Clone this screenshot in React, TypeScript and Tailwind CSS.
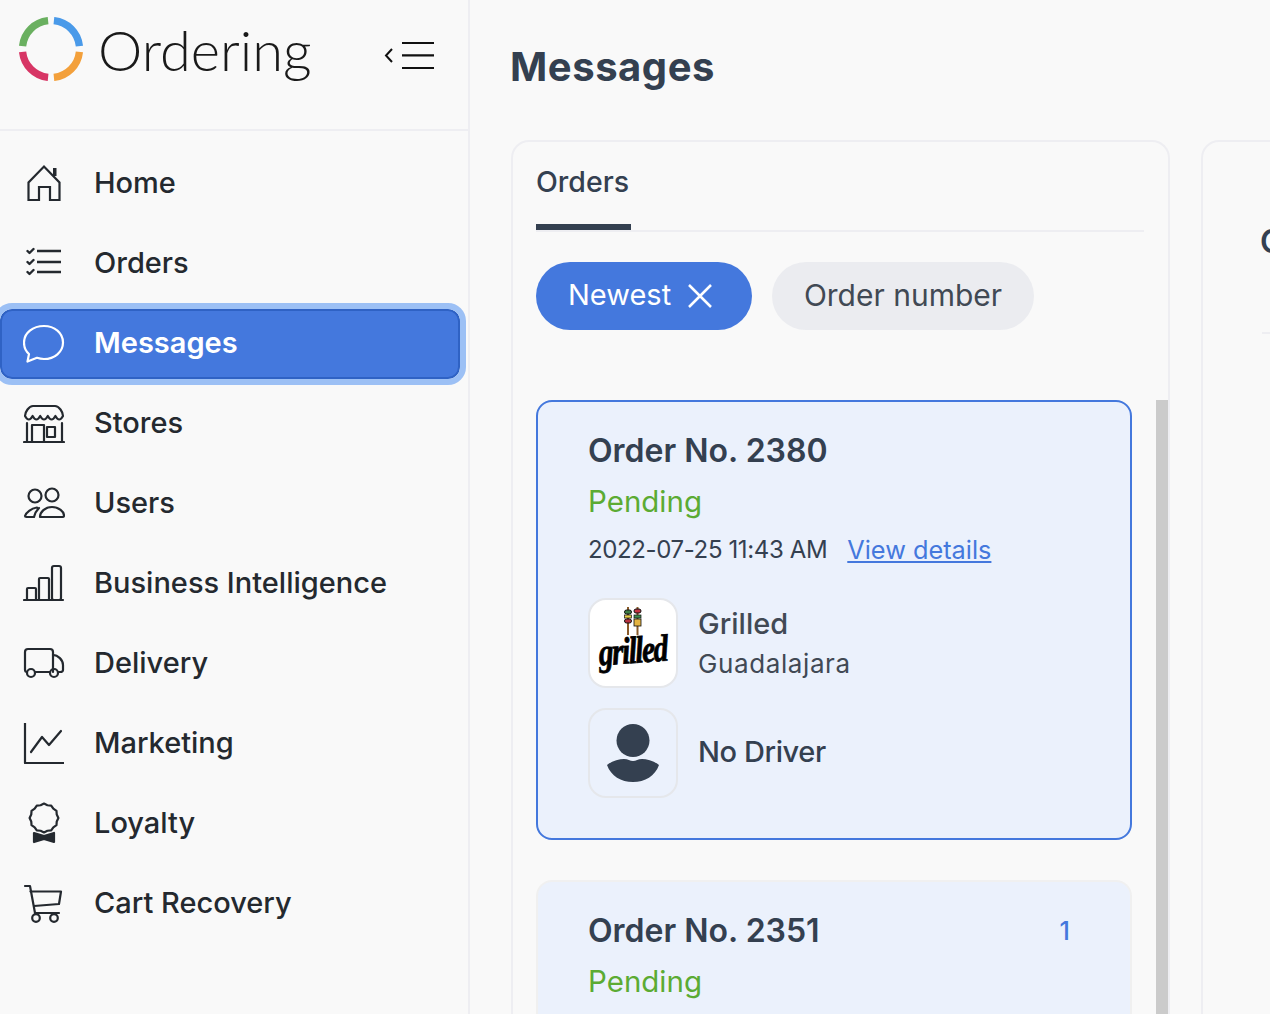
import React from "react";

const S = ({ children }: { children: React.ReactNode }) => (
  <svg width="42" height="42" viewBox="0 0 42 42" fill="none" stroke="currentColor" strokeWidth="2.200" strokeLinecap="round" strokeLinejoin="round">
    {children}
  </svg>
);

const HomeIcon = () => (
  <S>
    <path d="M5.500 38V20.500L21 4.500l15.500 16V38H27V25H16v13z" strokeLinecap="butt" strokeLinejoin="miter" />
    <rect x="30" y="6" width="3.500" height="8" fill="currentColor" stroke="none" />
  </S>
);
const OrdersIcon = () => (
  <S>
    <path d="M14 9h24M14 20h24M14 30h24" strokeWidth="2.500" strokeLinecap="butt" />
    <path d="M4.500 9l2 2 4-4M4.500 20l2 2 4-4M4.500 30l2 2 4-4" strokeWidth="2.400" />
  </S>
);
const MsgIcon = () => (
  <S>
    <path d="M21 4C31.500 4 40 11 40 20.500S31.500 37 21 37c-2.500 0-4.800-.4-7-1.200L4.500 39.500l1.500-7.500C2.500 29 1 25 1 20.500 1 11 10 4 21 4z" />
  </S>
);
const StoreIcon = () => (
  <S>
    <path d="M2 14C2 10 6 4 10 4h22c4 0 8 6 8 10q-3.800 7-7.600 0q-3.800 7-7.600 0q-3.800 7-7.600 0q-3.800 7-7.600 0q-3.800 7-7.600 0z" />
    <path d="M4 21v19M39 21v19M1 40h40M9 40V23h12v17M24 25h8v10h-8z" />
  </S>
);
const UsersIcon = () => (
  <S>
    <circle cx="12" cy="14" r="6.500" />
    <circle cx="29" cy="13" r="6.500" />
    <path d="M14 25.500c-6 1-11 5-12 8.500 0 1 .5 1 1.500 1H11c.5-3 2-6 5-9" />
    <path d="M17 35c0-5 5-10 12-10s12 5 12 8.500c0 1-.5 1.500-1.500 1.500z" />
  </S>
);
const ChartIcon = () => (
  <S>
    <path d="M1 38h39" />
    <rect x="4" y="26" width="9" height="12" rx="1" />
    <rect x="16" y="16" width="10" height="22" rx="1" />
    <rect x="29" y="4" width="9" height="34" rx="2" />
  </S>
);
const TruckIcon = () => (
  <S>
    <path d="M4 30c-1.200 0-2-1-2-2.500V10c0-2 1-3 3-3h22c2 0 3 1 3 3v20" />
    <path d="M12 30h15" />
    <path d="M30 13c5 0 10 5 10 10v5c0 1-1 2-3 2h-2" />
    <circle cx="8" cy="31" r="4" />
    <circle cx="31" cy="31" r="4" />
  </S>
);
const LineIcon = () => (
  <S>
    <path d="M2 1v40h39" strokeLinecap="butt" />
    <path d="M8 30l11-15 7 8L38 9" />
  </S>
);
const scallop = Array.from({ length: 24 }, (_, i) => {
  const r = i % 2 ? 13.200 : 14.400;
  const a = (i / 24) * Math.PI * 2;
  return `${(21 + r * Math.sin(a)).toFixed(2)},${(16 - r * Math.cos(a)).toFixed(2)}`;
}).join(" ");
const LoyaltyIcon = () => (
  <S>
    <polygon points={scallop} />
    <path d="M11 31l10 3 10-3v9l-10-3-10 3z" fill="currentColor" />
  </S>
);
const CartIcon = () => (
  <S>
    <path d="M2 4h5l5 27h24" />
    <path d="M7.500 9.500H38l-2 12.500-25 2" />
    <circle cx="13" cy="36" r="3.800" />
    <circle cx="31" cy="36" r="3.800" />
  </S>
);

const NAV: [string, React.ReactNode][] = [
  ["Home", <HomeIcon />],
  ["Orders", <OrdersIcon />],
  ["Messages", <MsgIcon />],
  ["Stores", <StoreIcon />],
  ["Users", <UsersIcon />],
  ["Business Intelligence", <ChartIcon />],
  ["Delivery", <TruckIcon />],
  ["Marketing", <LineIcon />],
  ["Loyalty", <LoyaltyIcon />],
  ["Cart Recovery", <CartIcon />],
];

const Logo = () => (
  <svg width="64" height="64" viewBox="0 0 66 66" fill="none" strokeWidth="7.500" className="shrink-0">
    <path d="M30 3.700A29.500 29.500 0 0 0 3.700 30" stroke="#6ab060" />
    <path d="M36 3.700A29.500 29.500 0 0 1 62.300 30" stroke="#4a9ae9" />
    <path d="M3.700 36A29.500 29.500 0 0 0 30 62.300" stroke="#d73665" />
    <path d="M62.300 36A29.500 29.500 0 0 1 36 62.300" stroke="#f3a03b" />
  </svg>
);

const Skewers = () => (
  <svg width="20" height="30" viewBox="0 0 20 30" className="block shrink-0">
    <path d="M5 1v28M14.500 1v28" stroke="#8a5a28" strokeWidth="2" />
    <rect x="1.500" y="4" width="7" height="4" rx="2" fill="#3e7d45" stroke="#111" />
    <rect x="1.500" y="9" width="7" height="3" fill="#e8d04a" stroke="#111" strokeWidth=".7" />
    <rect x="1.500" y="13" width="7" height="4" rx="2" fill="#b83240" stroke="#111" />
    <rect x="11" y="3" width="7" height="4" rx="2" fill="#c63342" stroke="#111" />
    <rect x="11" y="9" width="7" height="3" fill="#3e8d4f" stroke="#111" strokeWidth=".7" />
    <rect x="11" y="13" width="7" height="7" fill="#e4b341" stroke="#111" strokeWidth=".8" />
  </svg>
);

const PersonIcon = () => (
  <svg width="52" height="58" viewBox="0 0 52 58" fill="#344050">
    <circle cx="26" cy="16.500" r="16.500" />
    <path d="M0 41C5 37 12 35 17 35C21 35 23 37 26 37C29 37 31 35 35 35C40 35 47 37 52 41C48 52 38 58 26 58C14 58 4 52 0 41z" />
  </svg>
);

const OrderCard = ({ no, active, badge }: { no: string; active?: boolean; badge?: string }) => (
  <div className={active ? "rounded-[16px] border-2 border-[#4478dd] bg-[#ebf1fc] pl-[50px] pt-[29px] h-[440px] shrink-0" : "rounded-[16px] border-2 border-[#f0f0f0] bg-[#ebf1fc] pl-[50px] pt-[29px] h-[440px] shrink-0"}>
    <div className="flex items-center justify-between pr-[60px]">
      <div className="text-[32px] leading-[40px] font-semibold text-[#344050]">Order No. {no}</div>
      {badge && <div className="text-[25px] leading-[40px] font-medium text-[#4478dd]">{badge}</div>}
    </div>
    <div className="text-[29.5px] leading-[40px] mt-[10px] text-[#5bab33]">Pending</div>
    {active && (
      <>
        <div className="flex items-center gap-[20px] mt-[9px] h-[40px] text-[24px] tracking-[-0.37px] text-[#344050]">
          <span>2022-07-25 11:43 AM</span>
          <span className="text-[25.3px] tracking-normal text-[#4478dd] underline">View details</span>
        </div>
        <div className="flex items-center gap-[20px] mt-[28px]">
          <div className="w-[90px] h-[90px] rounded-[18px] border-2 border-[#e5e7eb] bg-white flex flex-col items-center overflow-hidden pt-[6px]">
            <Skewers />
            <div className="text-[38px] leading-[30px] -mt-[1px] font-bold italic text-black tracking-[-2px] scale-x-[0.78] -rotate-[4deg] [-webkit-text-stroke:0.8px_black]" style={{ fontFamily: '"Liberation Serif", serif' }}>grilled</div>
          </div>
          <div>
            <div className="text-[29px] leading-[40px] mt-[1px] font-medium text-[#414954]">Grilled</div>
            <div className="text-[26px] leading-[40px] tracking-[0.6px] text-[#414954]">Guadalajara</div>
          </div>
        </div>
        <div className="flex items-center gap-[20px] mt-[20px]">
          <div className="w-[90px] h-[90px] rounded-[18px] border-2 border-[#e5e7eb] flex items-center justify-center">
            <PersonIcon />
          </div>
          <div className="text-[29px] -mt-[2px] tracking-[-0.4px] font-medium text-[#344050]">No Driver</div>
        </div>
      </>
    )}
  </div>
);

export default function App() {
  return (
    <div className="flex h-[1014px] w-[1270px] overflow-hidden bg-[#f9f9f9]" style={{ fontFamily: 'Inter, "Noto Sans", sans-serif' }}>
      <aside className="w-[470px] shrink-0 border-r-2 border-[#eeeef2]">
        <div className="h-[131px] border-b-2 border-[#eeeef2] flex items-start pl-[19px] pt-[17px]">
          <Logo />
          <div className="ml-[15px] -mt-[3px] text-[56px] leading-[72px] font-light text-[#1a1a1a] whitespace-nowrap" style={{ fontFamily: 'Lato, sans-serif' }}>Ordering</div>
          <svg width="52" height="30" viewBox="0 0 52 30" className="ml-[72px] mt-[23px] shrink-0" fill="none" stroke="#111" strokeWidth="2.200">
            <path d="M8 9l-6 6.500L8 22" strokeWidth="2" />
            <path d="M18 3h32M18 15.300h32M18 28h32" />
          </svg>
        </div>
        <nav className="flex flex-col gap-[10px] pt-[18px]">
          {NAV.map(([label, icon]) =>
            label === "Messages" ? (
              <div key={label} className="h-[70px] w-[460px] flex items-center pb-[2px] rounded-[12px] bg-[#4478dd] border-2 border-[#2f62c4] outline-[6px] outline-[#9cc0f5] text-white">
                <span className="w-[92px] pl-[21px] shrink-0 flex">{icon}</span>
                <span className="text-[29px] font-semibold">{label}</span>
              </div>
            ) : (
              <div key={label} className="h-[70px] flex items-center pb-[2px] text-[#24292f]">
                <span className="w-[94px] pl-[23px] shrink-0 flex">{icon}</span>
                <span className="text-[29px] font-medium">{label}</span>
              </div>
            )
          )}
        </nav>
      </aside>
      <main className="flex-1 min-w-0 pl-[41px]">
        <h1 className="h-[140px] pt-[41px] -ml-[1px] text-[40px] leading-[52px] font-bold tracking-[0.55px] text-[#344050]">Messages</h1>
        <div className="flex gap-[31px]">
          <section className="w-[659px] h-[900px] shrink-0 rounded-t-[18px] border-2 border-b-0 border-[#eeeef2] pt-[20px] flex flex-col">
            <div className="ml-[23px] mr-[24px] border-b-2 border-[#eeeef2] h-[70px] shrink-0">
              <div className="w-[95px] h-[68px] border-b-[6px] border-[#344050] text-[28.5px] leading-[40px] font-medium text-[#344050] whitespace-nowrap">Orders</div>
            </div>
            <div className="flex gap-[20px] ml-[23px] mt-[30px] shrink-0">
              <div className="h-[68px] w-[216px] rounded-full bg-[#4478dd] text-white flex items-center pl-[32px] pb-[2px] text-[29px]">
                Newest
                <svg width="26" height="26" viewBox="0 0 26 26" className="ml-[16px] mt-[2px]" fill="none" stroke="#fff" strokeWidth="2.500"><path d="M2 2l22 22M24 2L2 24" /></svg>
              </div>
              <div className="h-[68px] w-[262px] rounded-full bg-[#ebecf0] text-[#414954] flex items-center justify-center pb-[2px] text-[30px]">Order number</div>
            </div>
            <div className="flex gap-[24px] ml-[23px] mt-[70px]">
              <div className="w-[596px] flex flex-col gap-[40px]">
                <OrderCard no="2380" active />
                <OrderCard no="2351" badge="1" />
              </div>
              <div className="w-[12px] h-[700px] bg-[#cbcbcb]" />
            </div>
          </section>
          <section className="w-[500px] h-[900px] shrink-0 rounded-t-[18px] border-2 border-b-0 border-[#eeeef2] pl-[59px] pt-[80px]">
            <div className="h-[112px] border-b-2 border-[#eeeef2] text-[32px] leading-[40px] font-semibold text-[#344050]"><span className="-ml-[2px]">Order</span></div>
          </section>
        </div>
      </main>
    </div>
  );
}
